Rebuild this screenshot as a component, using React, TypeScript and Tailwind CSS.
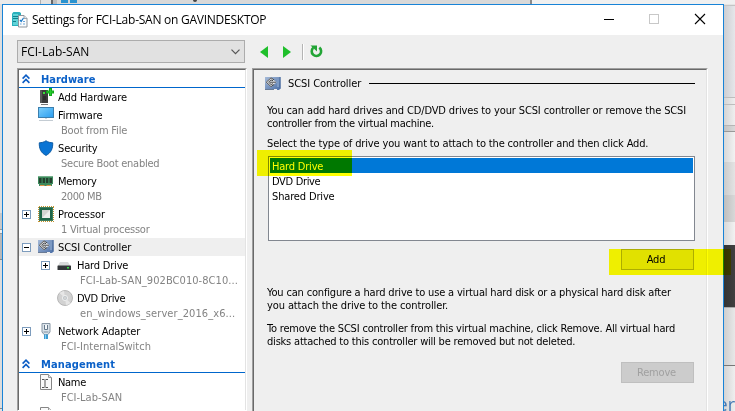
import type { ReactNode } from "react";

const ui = "font-['DejaVu_Sans_Condensed','DejaVu_Sans',sans-serif] text-[11px]";
const segoe = "font-['Open_Sans','Noto_Sans',sans-serif] text-[12px]";

function AppIcon() {
  return (
    <svg width="16" height="16" viewBox="0 0 16 16" className="shrink-0">
      <path d="M0 1.5 1.5 0h6L9 1v13H0z" fill="#2ab0bc" />
      <path d="M1 2h5v11H1z" fill="#5fd3d8" />
      <path d="M1 4.5h5M1 6.5h5M1 9.5h3" stroke="#14808c" strokeWidth="1" />
      <path d="M6.5 3.5h5.5l3 3v8.5H6.5z" fill="#fbfcfd" stroke="#8d969d" />
      <path d="M12 3.5v3h3" fill="#dfe4e8" stroke="#8d969d" strokeWidth=".8" />
      <path d="m8 8 1.2 1.4L11.5 6" fill="none" stroke="#1979ca" strokeWidth="1.2" />
      <path d="M8 12h1.5M11 9.5h2M11 12h2" stroke="#6ea6d8" />
    </svg>
  );
}

function AddHardwareIcon() {
  return (
    <svg width="16" height="18" viewBox="0 0 16 18">
      <path d="M2 2.5 3 2h6.500l.5.5V15H2z" fill="#3c3c3c" />
      <path d="M2 2.500h2V15H2z" fill="#5a5a5a" />
      <path d="M5 9h3M5 11h3" stroke="#1c1c1c" />
      <path d="M3 16.500h7" stroke="#777" />
      <rect x="5" y="4" width="2" height="2" fill="#3ae03a" />
      <path d="M11 0h3v2.500h2v3h-2v2.500h-3v-2.500H8v-3h3z" fill="#12a51a" />
      <path d="M12 1h1v2.500h2v1h-2V7h-1V4.500H9v-1h3z" fill="#26cf2d" />
    </svg>
  );
}

function MonitorIcon() {
  return (
    <svg width="16" height="16" viewBox="0 0 16 16">
      <defs>
        <linearGradient id="screen" x1="0" y1="0" x2="1" y2="1">
          <stop offset="0" stopColor="#7fd0fb" />
          <stop offset="1" stopColor="#2a9df0" />
        </linearGradient>
      </defs>
      <rect x=".5" y=".5" width="15" height="10" fill="url(#screen)" stroke="#3c7fae" />
      <path d="M7 11h2v1H7z" fill="#cfd5da" />
      <path d="M1 13.500h14" stroke="#c4ccd3" />
    </svg>
  );
}

function ShieldIcon() {
  return (
    <svg width="16" height="16" viewBox="0 0 16 16">
      <path d="M8 .8C6 2.200 3.500 2.800 1.300 2.800 1 8.500 3 13 8 15.400 13 13 15 8.500 14.700 2.800 12.500 2.800 10 2.200 8 .8z" fill="#0a74d4" stroke="#0c5ba5" strokeWidth="1" />
    </svg>
  );
}

function MemoryIcon() {
  return (
    <svg width="16" height="16" viewBox="0 0 16 16">
      <rect x="0" y="3" width="15" height="10" fill="#3d8a5c" />
      <rect x="0" y="3" width="15" height="1" fill="#76b08c" />
      <path d="M1 5h2.500v5H1zM4.700 5h2.300v5H4.700zM8 5h2.300v5H8zM11.500 5H14v5h-2.500z" fill="#24402f" />
      <path d="M2 12.500h4.500M8.500 12.500H13" stroke="#e2944a" />
      <path d="M0 11h1v2H0zM14 11h1v2h-1z" fill="#fff" />
    </svg>
  );
}

function ProcessorIcon() {
  return (
    <svg width="16" height="16" viewBox="0 0 16 16">
      <path d="M.5 1v15M15.500 1v15M1 .5h15M1 15.500h15" stroke="#c8922c" strokeDasharray="1 1" />
      <rect x="1" y="1" width="14" height="14" fill="#1f6547" />
      <rect x="1.500" y="1.500" width="13" height="13" fill="none" stroke="#3e7d5e" />
      <rect x="4" y="4" width="8" height="8" fill="#d3d3d0" />
      <path d="M4 12 12 4v8z" fill="#eeeeec" />
    </svg>
  );
}

function ScsiIcon() {
  return (
    <svg width="16" height="14" viewBox="0 0 16 14" className="shrink-0">
      <defs>
        <linearGradient id="card" x1="0" y1="0" x2="1" y2="1">
          <stop offset="0" stopColor="#a5bad8" />
          <stop offset="1" stopColor="#4a6ea6" />
        </linearGradient>
      </defs>
      <path d="M0 0h15.500v12h-1v1H12v-1H9v1H0z" fill="url(#card)" />
      <path d="M15 0v11.500" stroke="#456799" />
      <path d="M12 2h2v8h-2z" fill="#7c9ac4" />
      <path d="M0 12.500h9" stroke="#6a7b95" />
      <path d="M6 .2 11.500 5.200 6 10.200.5 5.200z" fill="#e6eaf0" />
      <path d="M9.300 3.100 6 .8 1.300 5.200 6 9.600l3.300-2.300" fill="none" stroke="#333" strokeWidth=".9" />
      <path d="M8 3.700 6 2.900 3.600 5.200 6 7.500l2-.8M5 5.200h6" fill="none" stroke="#333" strokeWidth=".9" />
    </svg>
  );
}

function DiskIcon() {
  return (
    <svg width="16" height="16" viewBox="0 0 16 16">
      <path d="M3 5h8l2.500 4H.8z" fill="#d9dadb" />
      <rect x=".5" y="8.500" width="13.500" height="4.500" rx=".6" fill="#333639" />
      <rect x="10" y="10" width="2" height="1.500" fill="#35df45" />
    </svg>
  );
}

function DvdIcon() {
  return (
    <svg width="16" height="16" viewBox="0 0 16 16">
      <circle cx="8" cy="8" r="7.500" fill="#d2d2d2" stroke="#b1b1b1" strokeWidth=".9" />
      <path d="M8 8 2.500 3A7.200 7.200 0 0 1 7 .9zM8 8l5.500 5A7.200 7.200 0 0 1 9 15.100z" fill="#e6e6e6" />
      <circle cx="8" cy="8" r="2.600" fill="#c6cdd2" stroke="#eee" />
      <circle cx="8" cy="8" r="1" fill="#fff" stroke="#aaa" strokeWidth=".5" />
    </svg>
  );
}

function NetworkIcon() {
  return (
    <svg width="16" height="16" viewBox="0 0 16 16">
      <path d="M4 .5h8v8.500l-2 2.500H6L4 9z" fill="#dbe3ea" stroke="#8796a4" />
      <path d="M6.500 2v4.500h3V2" fill="#f5f8fa" stroke="#65798b" />
      <path d="M5.500 9h5" stroke="#7d8f9f" />
      <path d="M6 11.500h4V16H6z" fill="#3b9bd2" />
      <path d="M7 11.500h1V16H7z" fill="#8accf0" />
    </svg>
  );
}

function NameIcon() {
  return (
    <svg width="16" height="16" viewBox="0 0 16 16">
      <path d="M2.500.5h8l3 3v12h-11z" fill="#fafafa" stroke="#868686" />
      <path d="M10.500.5v3h3" fill="#e4e4e4" stroke="#999" />
      <path d="M4 5.500h2.500M7.500 5.500H10M4 13.500h2.500M7.500 13.500H10M7 6v7" fill="none" stroke="#555" />
    </svg>
  );
}

function Chevrons() {
  return (
    <svg width="8" height="10" viewBox="0 0 8 10" fill="none" stroke="#0b5cc4" strokeWidth="1.600" className="ml-[3px] shrink-0">
      <path d="M.6 4.600 4 1.200l3.400 3.400M.6 8.900 4 5.500l3.400 3.400" />
    </svg>
  );
}

function Expander({ open }: { open: boolean }) {
  return (
    <svg width="9" height="9" viewBox="0 0 9 9" className="shrink-0">
      <rect x=".5" y=".5" width="8" height="8" fill="#fff" stroke="#7d9cbd" />
      <path d={open ? "M2 4.500h5" : "M2 4.500h5M4.500 2v5"} stroke="#000" />
    </svg>
  );
}

type ItemProps = {
  icon: ReactNode;
  label: string;
  labelClass: string;
  detail?: string;
  detailClass?: string;
  expander?: "plus" | "minus";
  child?: boolean;
  selected?: boolean;
};

function TreeItem({ icon, label, labelClass, detail, detailClass = "", expander, child, selected }: ItemProps) {
  return (
    <div className={child ? "pl-[19px]" : ""}>
      <div className={`flex h-[18px] items-center pl-[3px] ${selected ? "bg-[#efefef]" : ""}`}>
        <div className="w-4 shrink-0">{expander && <Expander open={expander === "minus"} />}</div>
        <div className="flex h-[18px] w-4 shrink-0 items-center">{icon}</div>
        <span className={`pt-[2px] pl-[4px] leading-[18px] whitespace-nowrap ${labelClass}`}>{label}</span>
      </div>
      {detail && (
        <div className={`h-[15px] pl-[42px] leading-[14px] whitespace-nowrap text-[#838383] ${detailClass}`}>{detail}</div>
      )}
    </div>
  );
}

function Section({ title, className }: { title: string; className: string }) {
  return (
    <div className="flex h-[18px] items-center border-b border-[#0066cc] text-[#0b61c8]">
      <Chevrons />
      <span className={`pt-[2px] pl-[11px] font-bold leading-[17px] ${className}`}>{title}</span>
    </div>
  );
}

const sunken =
  "border border-t-[#a0a0a0] border-l-[#a0a0a0] border-r-white border-b-white";
const sunkenInner =
  "border border-t-[#696969] border-l-[#696969] border-r-[#e3e3e3] border-b-[#e3e3e3]";

function Backdrop() {
  return (
    <div className="absolute inset-0 flex justify-between bg-[#e4e4e4]">
      <div className="absolute inset-x-0 top-0 flex h-1">
        <div className="w-10 bg-[#eaeaea]" />
        <div className="w-[11px] border-l border-[#b0b0b0] bg-[#e2e2e2]" />
        <div className="w-[6px] border-l-2 border-[#666] bg-[#bdbdbd]" />
        <div className="flex flex-1 gap-[2px] bg-[#d9d9d9] pl-[4px]">
          <div className="h-[3px] w-[7px] bg-[#2b93cf]" />
          <div className="h-[3px] w-[7px] bg-[#2b93cf]" />
          <div className="ml-[114px] h-[2px] w-[4px] rounded-b bg-[#444]" />
        </div>
        <div className="w-[205px] border-l-2 border-[#8a8a8a] bg-[#f0f0f0]" />
      </div>
      <div className="flex w-[2px] flex-col pt-[4px]">
        <div className="h-[209px] bg-[#dedede]" />
        <div className="h-[16px] bg-[#c8c8c8]" />
        <div className="h-[5px] border-y border-[#999] bg-[#eee]" />
        <div className="h-[25px] bg-[#b9b9b9]" />
        <div className="h-[150px] border-y border-[#888] bg-[#dcdcdc]" />
      </div>
      <div className="flex w-[12px] flex-col pt-[5px]">
        <div className="h-[92px] shrink-0 border-t border-[#c4c4c4] bg-linear-to-r from-[#cbccd0] to-[#e6e7ea]" />
        <div className="h-[7px] shrink-0 border-t border-[#bdbdbd] bg-linear-to-r from-[#d2d2d2] to-[#efefef]" />
        <div className="h-[21px] shrink-0 border-t border-[#bdbdbd] bg-linear-to-r from-[#d2d2d2] to-[#efefef]" />
        <div className="h-[6px] shrink-0 border-t border-[#b5b5b5] bg-linear-to-r from-[#c0c0c0] to-[#d9d9d9]" />
        <div className="h-[31px] shrink-0 border-t border-[#999] bg-linear-to-r from-[#d6d6d6] to-[#f2f2f2]" />
        <div className="h-[33px] shrink-0 bg-linear-to-r from-[#c9c9c9] to-[#e4e4e4]" />
        <div className="h-[27px] shrink-0 bg-linear-to-r from-[#bcbcbc] to-[#d8d8d8]" />
        <div className="h-[23px] shrink-0 bg-linear-to-r from-[#d6d6d6] to-[#f2f2f2]" />
        <div className="h-[62px] shrink-0 bg-linear-to-r from-[#323232] to-[#404040]" />
        <div className="h-[58px] shrink-0 border-t border-[#aaa] bg-linear-to-r from-[#cccccc] to-[#e8e8e8]" />
        <div className="flex flex-1 items-end justify-end border-t border-[#777] bg-linear-to-r from-[#d2d2d2] to-[#efefef] font-['Open_Sans',sans-serif] text-[18px] leading-[13px] whitespace-nowrap text-[#4479b5]">
          er
        </div>
      </div>
    </div>
  );
}

function TitleBar() {
  return (
    <div className="flex h-[30px] shrink-0 items-center bg-white pl-[9px]">
      <AppIcon />
      <span className={`flex-1 pl-[4px] tracking-[-0.25px] text-black ${segoe}`}>
        Settings for FCI-Lab-SAN on GAVINDESKTOP
      </span>
      <svg width="112" height="12" viewBox="0 0 112 12" fill="none" className="mr-[12px] mb-[2px]">
        <path d="M5 6.500h10" stroke="#000" />
        <rect x="50.500" y="1.500" width="9" height="9" stroke="#c8c8c8" />
        <path d="m96 1 10 10M106 1 96 11" stroke="#000" strokeWidth="1.100" />
      </svg>
    </div>
  );
}

function Sidebar() {
  return (
    <div className="flex w-[230px] shrink-0 flex-col pt-[5px]">
      <div className="flex h-[23px] w-[228px] shrink-0 items-center justify-between border border-[#acacac] bg-[#e1e1e1] pr-[4px] pl-[3px]">
        <span className={segoe}>FCI-Lab-SAN</span>
        <svg width="9" height="6" viewBox="0 0 9 6" fill="none" stroke="#555" strokeWidth="1.200">
          <path d="m.5.7 4 4 4-4" />
        </svg>
      </div>
      <div className={`mt-[5px] min-h-0 flex-1 overflow-hidden ${sunken}`}>
        <div className={`h-[400px] bg-white ${sunkenInner}`}>
          <div className="h-[17px]">
            <Section title="Hardware" className="" />
          </div>
          <div className="pt-px">
            <TreeItem icon={<AddHardwareIcon />} label="Add Hardware" labelClass="tracking-[-0.08px]" />
          </div>
          <TreeItem icon={<MonitorIcon />} label="Firmware" labelClass="tracking-[-0.1px]" detail="Boot from File" detailClass="tracking-[-0.17px]" />
          <TreeItem icon={<ShieldIcon />} label="Security" labelClass="tracking-[-0.15px]" detail="Secure Boot enabled" detailClass="tracking-[-0.24px]" />
          <TreeItem icon={<MemoryIcon />} label="Memory" labelClass="tracking-[-0.3px]" detail="2000 MB" detailClass="tracking-[-0.45px]" />
          <TreeItem icon={<ProcessorIcon />} label="Processor" labelClass="tracking-[-0.07px]" detail="1 Virtual processor" detailClass="tracking-[-0.24px]" expander="plus" />
          <div className="h-[18px]">
            <TreeItem icon={<ScsiIcon />} label="SCSI Controller" labelClass="tracking-[-0.06px]" expander="minus" selected />
          </div>
          <TreeItem child icon={<DiskIcon />} label="Hard Drive" labelClass="tracking-[-0.2px]" detail="FCI-Lab-SAN_902BC010-8C10..." detailClass="tracking-[0.06px]" expander="plus" />
          <TreeItem child icon={<DvdIcon />} label="DVD Drive" labelClass="tracking-[-0.33px]" detail="en_windows_server_2016_x6..." detailClass="tracking-[0.08px]" />
          <TreeItem icon={<NetworkIcon />} label="Network Adapter" labelClass="tracking-[-0.1px]" detail="FCI-InternalSwitch" expander="plus" />
          <div className="h-[18px]">
            <Section title="Management" className="tracking-[0.12px]" />
          </div>
          <TreeItem icon={<NameIcon />} label="Name" labelClass="tracking-[-0.3px]" detail="FCI-Lab-SAN" />
          <div className="pt-px pl-[19px]">
            <NameIcon />
          </div>
        </div>
      </div>
    </div>
  );
}

function Toolbar() {
  return (
    <div className="flex h-[33px] items-center pl-[8px]">
      <svg width="8" height="12" viewBox="0 0 8 12">
        <path d="M8 0v12L0 6z" fill="#1fbf2b" />
      </svg>
      <svg width="8" height="12" viewBox="0 0 8 12" className="ml-[15px]">
        <path d="M0 0v12l8-6z" fill="#1fbf2b" />
      </svg>
      <div className="ml-[11px] h-[16px] w-[2px] border-r border-l border-r-white border-l-[#b4b4b4]" />
      <svg width="13" height="13" viewBox="0 0 13 13" className="ml-[6px]">
        <path d="M9.300 2.600a4.700 4.700 0 1 1-6 .2" fill="none" stroke="#22a535" strokeWidth="2.600" />
        <path d="M.5.500H7v6z" fill="#22a535" />
      </svg>
    </div>
  );
}

function DetailPanel() {
  return (
    <div className={`h-[400px] w-[456px] ${sunken}`}>
      <div className={`h-full pt-[6px] pr-[11px] pl-[11px] ${sunkenInner}`}>
        <div className="flex h-[15px] items-center">
          <ScsiIcon />
          <span className="pl-[7px] leading-[15px] tracking-[-0.06px]">SCSI Controller</span>
          <div className="ml-[8px] h-px flex-1 bg-black" />
        </div>
        <div className="pt-[13px] pl-[2px] leading-[13px] whitespace-nowrap">
          <p className="tracking-[-0.127px]">You can add hard drives and CD/DVD drives to your SCSI controller or remove the SCSI</p>
          <p className="tracking-[-0.26px]">controller from the virtual machine.</p>
        </div>
        <p className="pt-[7px] pl-[2px] leading-[13px] tracking-[-0.15px] whitespace-nowrap">
          Select the type of drive you want to attach to the controller and then click Add.
        </p>
        <div className="mt-[6px] ml-[3px] h-[85px] border border-[#828790] bg-white p-px leading-[17px]">
          <div className="h-[15px] bg-[#0078d7] pl-[2px] tracking-[-0.2px] text-white">Hard Drive</div>
          <div className="h-[15px] pl-[2px] tracking-[-0.33px]">DVD Drive</div>
          <div className="h-[15px] pl-[2px] tracking-[-0.15px]">Shared Drive</div>
        </div>
        <div className="flex justify-end pt-[8px] pr-px">
          <div className="flex h-[21px] w-[73px] items-center justify-center border border-[#adadad] bg-[#e1e1e1] pt-[2px] pr-[3px] tracking-[-0.2px]">Add</div>
        </div>
        <div className="pt-[16px] pl-[2px] leading-[13px] whitespace-nowrap">
          <p className="tracking-[-0.166px]">You can configure a hard drive to use a virtual hard disk or a physical hard disk after</p>
          <p className="tracking-[-0.11px]">you attach the drive to the controller.</p>
        </div>
        <div className="pt-[10px] pl-[2px] leading-[13px] whitespace-nowrap">
          <p className="tracking-[-0.19px]">To remove the SCSI controller from this virtual machine, click Remove. All virtual hard</p>
          <p className="tracking-[-0.2px]">disks attached to this controller will be removed but not deleted.</p>
        </div>
        <div className="flex justify-end pt-[14px] pr-px">
          <div className="flex h-[21px] w-[73px] items-center justify-center border border-[#bfbfbf] bg-[#cccccc] pt-[2px] pr-[2px] tracking-[-0.2px] text-[#a0a0a0]">Remove</div>
        </div>
      </div>
    </div>
  );
}

export default function App() {
  return (
    <div className={`relative h-[411px] w-[735px] overflow-hidden text-black ${ui}`}>
      <Backdrop />
      <div className="absolute top-[4px] left-[2px] flex h-[407px] w-[722px] flex-col border border-b-0 border-[#1883d7] bg-[#efefef]">
        <TitleBar />
        <div className="flex min-h-0 flex-1 overflow-hidden pl-[14px]">
          <Sidebar />
          <div className="pl-[5px]">
            <Toolbar />
            <DetailPanel />
          </div>
        </div>
      </div>
      <div className="absolute top-[150px] left-[257px] h-[26px] w-[95px] bg-[#ffff00] mix-blend-multiply" />
      <div className="absolute top-[249px] left-[609px] h-[26px] w-[122px] bg-[#ffff00] mix-blend-multiply" />
    </div>
  );
}
